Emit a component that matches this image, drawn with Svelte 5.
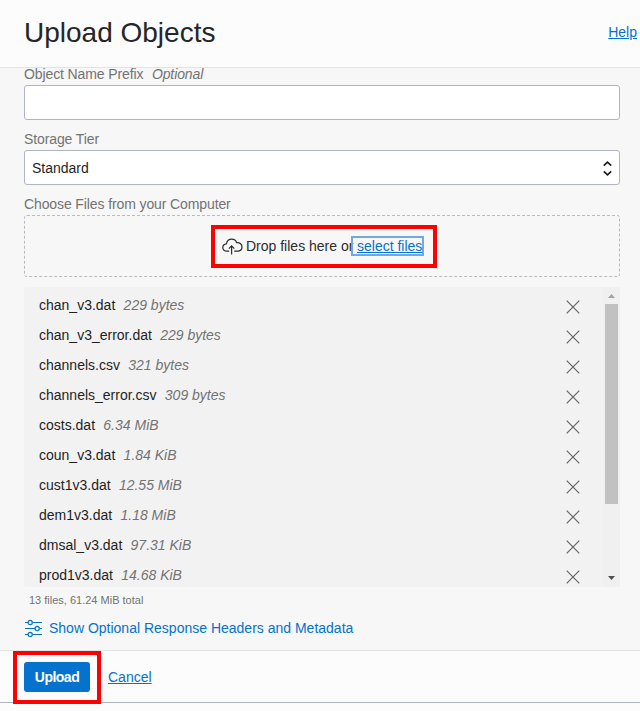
<script>
  const files = [
    ['chan_v3.dat', '229 bytes'],
    ['chan_v3_error.dat', '229 bytes'],
    ['channels.csv', '321 bytes'],
    ['channels_error.csv', '309 bytes'],
    ['costs.dat', '6.34 MiB'],
    ['coun_v3.dat', '1.84 KiB'],
    ['cust1v3.dat', '12.55 MiB'],
    ['dem1v3.dat', '1.18 MiB'],
    ['dmsal_v3.dat', '97.31 KiB'],
    ['prod1v3.dat', '14.68 KiB']
  ];
</script>

<div class="dialog">
  <header>
    <h1>Upload Objects</h1>
    <a class="help" href="#help">Help</a>
  </header>

  <main>
    <label for="prefix">Object Name Prefix<em>Optional</em></label>
    <input id="prefix" type="text" />

    <div class="label">Storage Tier</div>
    <div class="select">
      <span>Standard</span>
      <svg width="9" height="16" viewBox="0 0 9 16" fill="none" stroke="#1a1a1a" stroke-width="1.6">
        <path d="M.8 5.7 L4.5 2.2 L8.2 5.7 M.8 11.3 L4.5 14.8 L8.2 11.3" />
      </svg>
    </div>

    <div class="label">Choose Files from your Computer</div>
    <div class="drop">
      <svg class="cloud" width="22" height="17" viewBox="0 0 22 17" fill="none" stroke="#2d2d2d" stroke-width="1.2">
        <path d="M7.2 13.2 H4.8 C2.6 13.2 .8 11.7 .8 9.6 C.8 7.5 2.3 6 4.4 5.8 C5 3 6.9 1.2 9.6 1.2 C12.2 1.2 14 2.6 14.7 4.7 C18 4.4 20 6.5 20 9 C20 11.5 18.3 13.2 15.7 13.2 H12.2" />
        <path d="M9.6 16.5 V8 M6.9 10.6 L9.6 7.9 L12.3 10.6" />
      </svg>
      <span class="drop-text">Drop files here or</span>
      <a class="pick" href="#select">select files</a>
      <div class="mark pick-mark"></div>
    </div>

    <div class="list">
      <ul>
        {#each files as [name, size]}
          <li>
            <span>{name}</span><em>{size}</em>
            <svg width="14" height="14" viewBox="0 0 14 14" stroke="#666" stroke-width="1.2">
              <path d="M.7 .7 L13.3 13.3 M13.3 .7 L.7 13.3" />
            </svg>
          </li>
        {/each}
      </ul>
      <div class="bar">
        <svg width="17" height="17" viewBox="0 0 17 17"><path d="M5 11 L8.5 7 L12 11Z" fill="#a3a3a3" /></svg>
        <div class="thumb"></div>
        <svg class="down" width="17" height="17" viewBox="0 0 17 17"><path d="M5 6 L12 6 L8.5 10Z" fill="#505050" /></svg>
      </div>
    </div>

    <div class="total">13 files, 61.24 MiB total</div>
    <div class="more">
      <svg width="18" height="18" viewBox="0 0 18 18" fill="none" stroke="#0572ce" stroke-width="1.2">
        <path d="M0 3.5 H3 M7.4 3.5 H17 M0 9.5 H10 M14.4 9.5 H17 M0 15.5 H3 M7.4 15.5 H17" />
        <circle cx="5.2" cy="3.5" r="2.1" /><circle cx="12.2" cy="9.5" r="2.1" /><circle cx="5.2" cy="15.5" r="2.1" />
      </svg>
      <span>Show Optional Response Headers and Metadata</span>
    </div>
  </main>

  <footer>
    <div class="action">
      <button>Upload</button>
      <div class="mark upload-mark"></div>
    </div>
    <a href="#cancel">Cancel</a>
  </footer>
</div>

<style>
  :global(body) { margin: 0; background: #fcfcfc; }
  * { box-sizing: border-box; }
  .dialog {
    width: 640px; height: 711px; overflow: hidden;
    display: flex; flex-direction: column;
    background: #fcfcfc; color: #1f1f1f;
    font: 14px/20px "Liberation Sans", Arial, sans-serif;
  }
  header {
    flex: none; height: 68px; display: flex; align-items: center; justify-content: space-between;
    padding: 0 3px 3px 24px; border-bottom: 1px solid #e3e3e3;
  }
  h1 { margin: 2px 0 0; font-size: 28px; line-height: 36px; font-weight: 400; color: #262626; }
  a { color: #0572ce; text-decoration: underline; }
  main {
    flex: none; height: 583px; padding: 0 20px 0 24px; background: #f7f7f7;
    border-bottom: 1px solid #e3e3e3; display: flex; flex-direction: column;
  }
  label, .label {
    display: block; color: #737373; height: 20px; line-height: 18px; flex: none;
    letter-spacing: -.11px;
  }
  label { height: 17px; line-height: 13px; }
  label em { margin-left: 8.5px; }
  input {
    flex: none; display: block; width: 100%; height: 35px; margin: 0 0 10px; padding: 0 7px;
    background: #fff; border: 1px solid #b1b5c1; border-radius: 3px; font: inherit; outline: none;
  }
  .select {
    flex: none; height: 35px; margin-bottom: 10px; padding: 0 7px;
    display: flex; align-items: center; justify-content: space-between;
    background: #fff; border: 1px solid #b1b5c1; border-radius: 3px;
  }
  .drop {
    position: relative; flex: none; height: 62px; display: flex; align-items: center;
    padding-left: 197px; border: 1px dashed #b8bcc0; border-radius: 3px; color: #2d2d2d;
  }
  .cloud { flex: none; margin-right: 2px; }
  .drop-text { width: 105px; white-space: nowrap; }
  .pick {
    width: 73px; height: 20px; line-height: 17px; padding-left: 4px;
    border: 2px solid #73a7e2; white-space: nowrap;
  }
  .mark { position: absolute; border: 4px solid #f00; pointer-events: none; }
  .pick-mark { left: 186px; top: 9px; width: 226px; height: 43px; }
  .list {
    flex: none; height: 300px; margin-top: 10px; display: flex;
    background: #f2f2f2; border-radius: 3px; overflow: hidden;
  }
  ul { flex: 1; list-style: none; margin: 0; padding: 3px 23px 0 15px; }
  li { display: flex; align-items: center; height: 30px; }
  li em { color: #737373; margin-left: 8.3px; flex: 1; }
  li svg { margin-top: 4px; }
  .bar { width: 17px; display: flex; flex-direction: column; align-items: center; background: #f0f0f0; }
  .bar svg { flex: none; }
  .thumb { width: 13px; height: 200px; background: #c1c1c1; }
  .down { margin-top: auto; }
  .total { flex: none; margin: 5px 0 0 5px; height: 16px; line-height: 16px; font-size: 11px; color: #737373; }
  .more { flex: none; display: flex; align-items: center; gap: 6px; margin: 10px 0 0 1px; color: #0572ce; }
  footer {
    flex: none; height: 52px; padding-left: 24px; border-bottom: 1px solid #b1b5c1;
    display: flex; align-items: center; gap: 18px;
  }
  .action { position: relative; height: 30px; }
  button {
    display: block; width: 66px; height: 30px; padding: 0; border: 0; border-radius: 3px;
    background: #0572ce; color: #fff; font: bold 14px/30px "Liberation Sans", Arial, sans-serif;
    letter-spacing: -.5px;
  }
  .upload-mark { left: -11px; top: -11px; width: 88px; height: 53px; }
</style>
